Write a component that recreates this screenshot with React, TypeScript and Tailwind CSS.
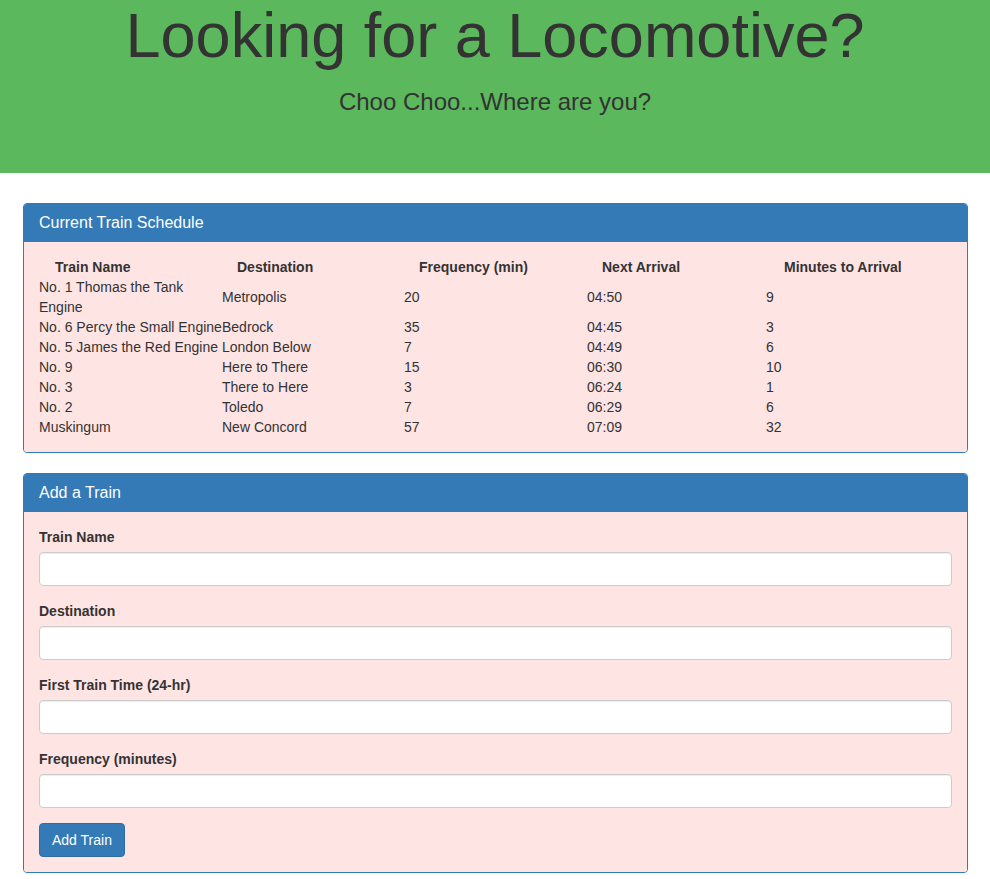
import React from "react";

const rows: [React.ReactNode, string, string, string, string][] = [
  [<>No. 1 Thomas the Tank<br />Engine</>, "Metropolis", "20", "04:50", "9"],
  ["No. 6 Percy the Small Engine", "Bedrock", "35", "04:45", "3"],
  ["No. 5 James the Red Engine", "London Below", "7", "04:49", "6"],
  ["No. 9", "Here to There", "15", "06:30", "10"],
  ["No. 3", "There to Here", "3", "06:24", "1"],
  ["No. 2", "Toledo", "7", "06:29", "6"],
  ["Muskingum", "New Concord", "57", "07:09", "32"],
];

const widths = ["w-[183px]", "w-[182px]", "w-[183px]", "w-[179px]", "w-[185px]"];
const headers = ["Train Name", "Destination", "Frequency (min)", "Next Arrival", "Minutes to Arrival"];
const headerPad = ["pl-[16px]", "pl-[15px]", "pl-[15px]", "pl-[15px]", "pl-[18px]"];

function Panel({ title, children, className }: { title: string; children: React.ReactNode; className?: string }) {
  return (
    <div className={"ml-[23px] w-[945px] rounded-[4px] border border-[#337ab7] shadow-[0_1px_1px_rgba(0,0,0,0.05)] overflow-hidden " + (className ?? "")}>
      <div className="bg-[#337ab7] text-white px-[15px] py-[10px] text-[16px] leading-[17.6px] h-[38px] border-b border-[#337ab7]">
        {title}
      </div>
      <div className="bg-[#ffe4e4] p-[15px]">{children}</div>
    </div>
  );
}

function Field({ label }: { label: string }) {
  return (
    <div className="mb-[15px]">
      <div className="font-bold text-[14px] leading-[20px] mb-[5px] text-[#333]">{label}</div>
      <div className="h-[34px] w-full bg-white border border-[#ccc] rounded-[4px] shadow-[inset_0_1px_1px_rgba(0,0,0,0.075)]" />
    </div>
  );
}

export default function App() {
  return (
    <div className="min-h-[879px] bg-white text-[#333] text-[14px] leading-[20px]" style={{ fontFamily: '"Liberation Sans", Arial, Helvetica, sans-serif' }}>
      <div className="bg-[#5cb85c] h-[173px] pt-[1px] text-center">
        <h1 className="text-[63px] leading-[69px] text-[#333]">Looking for a Locomotive?</h1>
        <h3 className="text-[24px] leading-[26px] mt-[19px] text-[#333]">Choo Choo...Where are you?</h3>
      </div>

      <div className="h-[30px]" />

      <Panel title="Current Train Schedule">
        <table className="table-fixed w-[912px] border-collapse">
          <thead>
            <tr>
              {headers.map((h, i) => (
                <th key={h} className={"text-left font-bold p-0 leading-[20px] " + widths[i] + " " + headerPad[i]}>
                  {h}
                </th>
              ))}
            </tr>
          </thead>
          <tbody>
            {rows.map((r, ri) => (
              <tr key={ri}>
                {r.map((c, ci) => (
                  <td key={ci} className="p-0 align-middle whitespace-nowrap leading-[20px]">
                    {c}
                  </td>
                ))}
              </tr>
            ))}
          </tbody>
        </table>
      </Panel>

      <div className="h-[20px]" />

      <Panel title="Add a Train">
        <Field label="Train Name" />
        <Field label="Destination" />
        <Field label="First Train Time (24-hr)" />
        <Field label="Frequency (minutes)" />
        <button className="bg-[#337ab7] border border-[#2e6da4] text-white rounded-[4px] px-[12px] h-[34px] text-[14px] leading-[20px]">
          Add Train
        </button>
      </Panel>
    </div>
  );
}
